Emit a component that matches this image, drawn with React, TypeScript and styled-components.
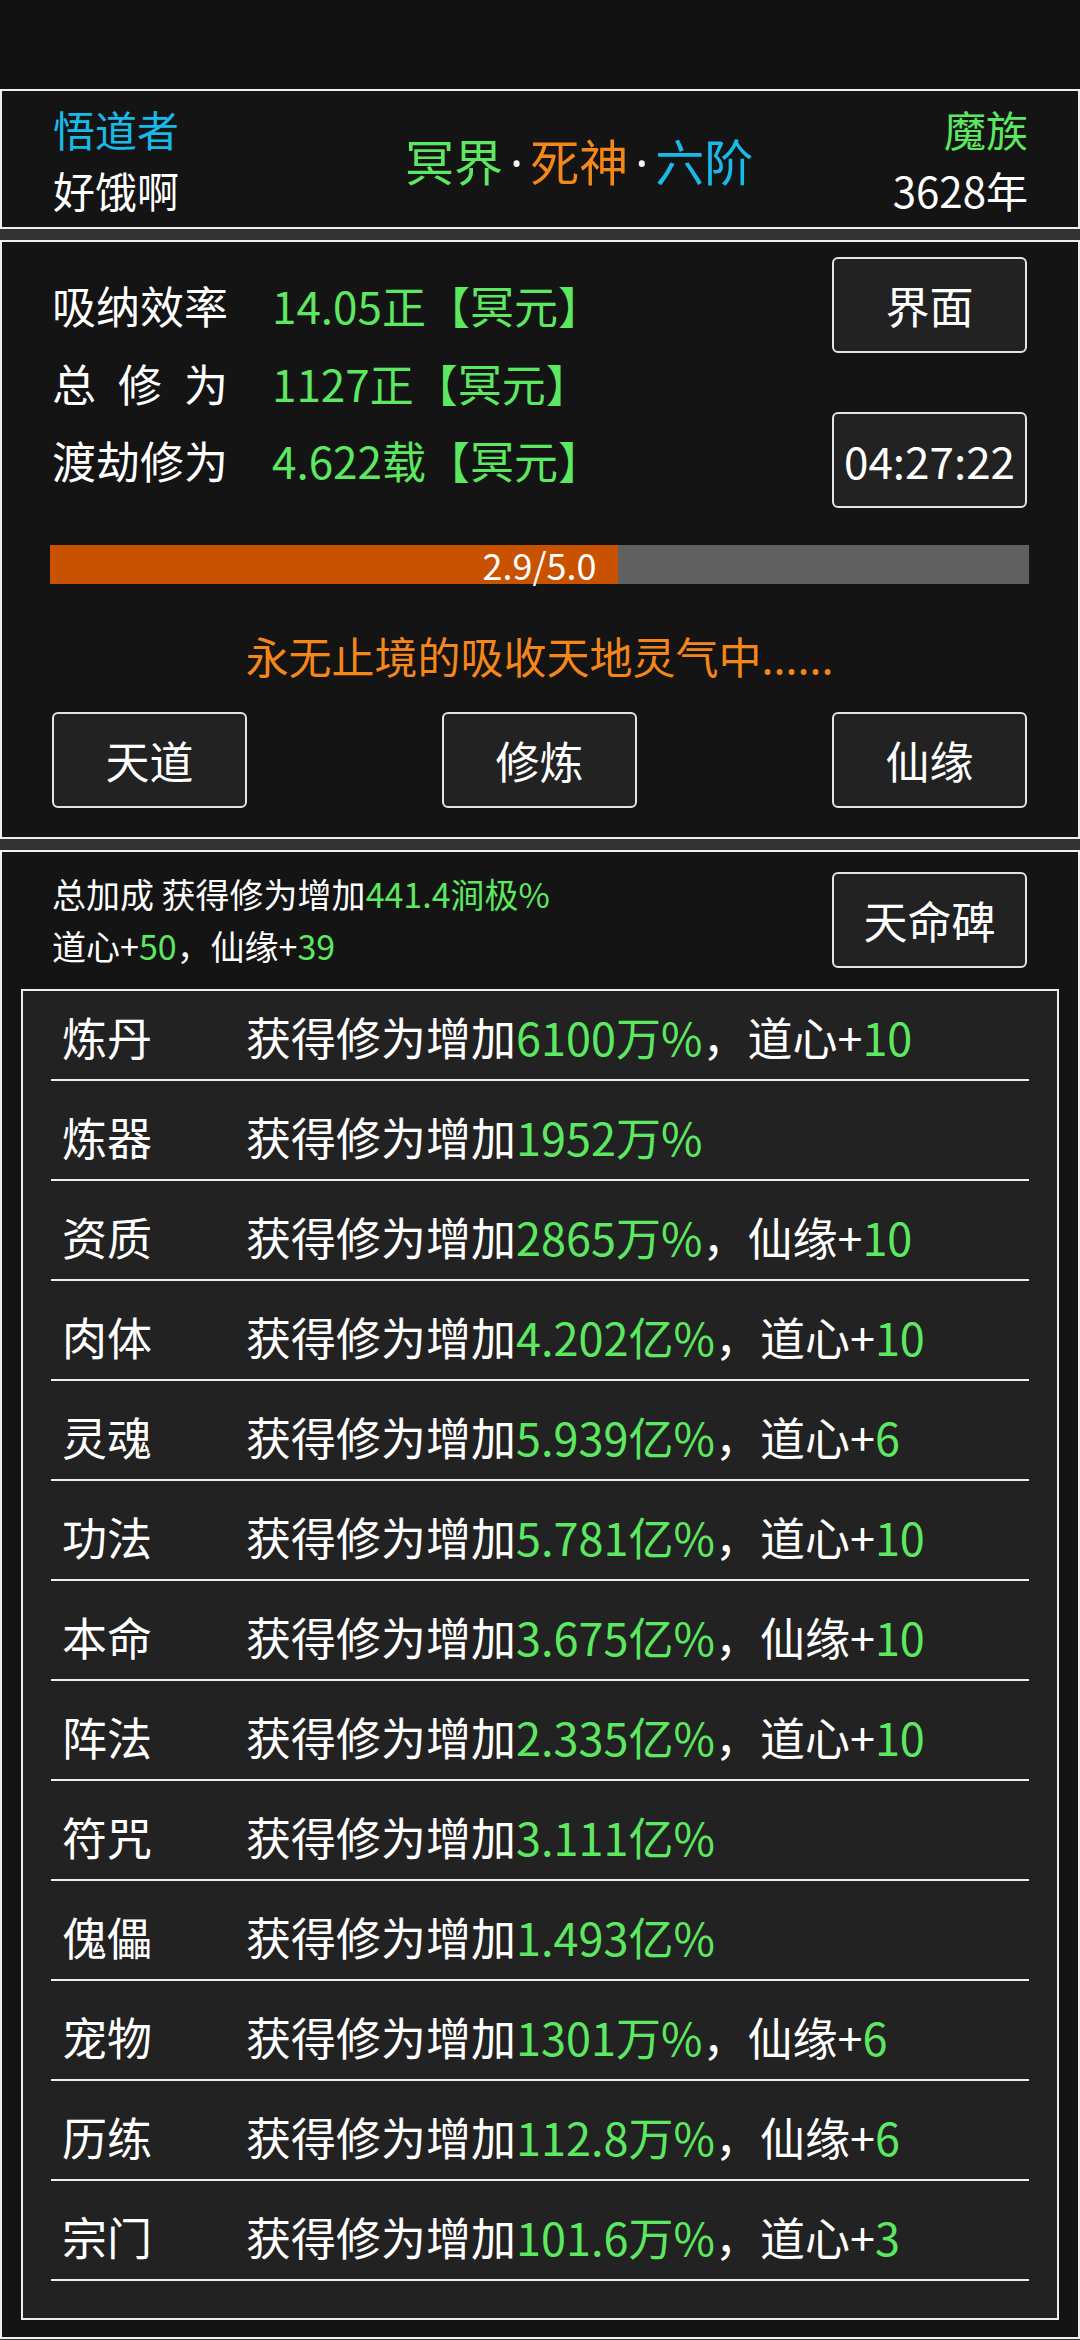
import React from "react";
import styled, { createGlobalStyle } from "styled-components";

const GREEN = "#5ce860";
const CYAN = "#19b9ea";
const ORANGE = "#f5861a";

const GlobalStyle = createGlobalStyle`
  html, body {
    margin: 0;
    padding: 0;
    background: #333333;
  }
  body {
    font-family: "Noto Sans CJK SC", "Noto Sans", sans-serif;
    color: #ffffff;
  }
  * { box-sizing: border-box; }
`;

const Page = styled.div`
  width: 1080px;
  height: 2340px;
  display: flex;
  flex-direction: column;
  background: #333333;
`;

const TopBar = styled.div`
  height: 89px;
  flex: none;
  background: #121212;
`;

const Panel = styled.section<{ $gap?: boolean }>`
  flex: none;
  border: 2px solid #f0f0f0;
  background: #141414;
  margin-top: ${(p) => (p.$gap ? "11px" : "0")};
`;

const HeaderRow = styled.div`
  height: 136px;
  display: grid;
  grid-template-columns: 352px auto 1fr;
  align-items: center;
  padding: 0 50px 0 51px;
`;

const SideCol = styled.div<{ $right?: boolean }>`
  display: flex;
  flex-direction: column;
  align-items: ${(p) => (p.$right ? "flex-end" : "flex-start")};
  font-size: 42px;
  line-height: 61px;
`;

const Colored = styled.span<{ $c?: string }>`
  color: ${(p) => p.$c || "#ffffff"};
`;

const Title = styled.div`
  font-size: 49px;
  line-height: 60px;
  white-space: nowrap;
  padding-top: 4px;
`;

// narrow Latin middle dot between the realm names
const Dot = styled.span`
  font-family: "Noto Sans", "DejaVu Sans", sans-serif;
  color: #f4f4f4;
  margin: 0 7px;
`;

const MainBody = styled.div`
  padding: 15px 51px 29px 50px;
  display: flex;
  flex-direction: column;
`;

const StatsGrid = styled.div`
  display: grid;
  grid-template-columns: 1fr 195px;
  grid-template-rows: 96px 59px 96px;
`;

const StatLine = styled.div<{ $row: number }>`
  grid-column: 1;
  grid-row: ${(p) => p.$row};
  display: flex;
  align-items: center;
  font-size: 44px;
  white-space: nowrap;
`;

const StatLabel = styled.div`
  width: 176px;
  margin-right: 44px;
  display: flex;
  justify-content: space-between;
`;

const Button = styled.button<{ $row?: number }>`
  width: 195px;
  height: 96px;
  border: 2px solid #e4e4e4;
  border-radius: 6px;
  background: #222222;
  color: #ffffff;
  font-family: inherit;
  font-size: 44px;
  padding: 0;
  cursor: pointer;
  grid-column: 2;
  grid-row: ${(p) => p.$row || "auto"};
`;

const Track = styled.div`
  position: relative;
  margin: 37px -2px 0;
  height: 39px;
  background: #606060;
`;

const Fill = styled.div`
  height: 100%;
  background: #c85200;
`;

const TrackLabel = styled.div`
  position: absolute;
  inset: 0;
  display: flex;
  align-items: center;
  justify-content: center;
  font-size: 36px;
  line-height: 39px;
  color: #ffffff;
`;

const Status = styled.div`
  margin-top: 44px;
  text-align: center;
  font-size: 43px;
  line-height: 54px;
  color: ${ORANGE};
`;

const ButtonRow = styled.div`
  margin-top: 30px;
  display: flex;
  justify-content: space-between;
`;

const BonusBody = styled.div`
  padding: 20px 19px 17px;
`;

const BonusHeader = styled.div`
  height: 96px;
  display: flex;
  justify-content: space-between;
  align-items: center;
  padding: 0 32px 0 31px;
  margin-bottom: 21px;
`;

const BonusText = styled.div`
  font-size: 34px;
  line-height: 52px;
  white-space: nowrap;
`;

const ListBox = styled.div`
  border: 2px solid #eeeeee;
  background: #222222;
  padding: 0 28px 37px;
`;

const Row = styled.div`
  height: 100px;
  border-bottom: 2px solid #eeeeee;
  display: flex;
  align-items: flex-end;
  padding: 0 0 17px 11px;
  font-size: 45px;
  line-height: 50px;
  white-space: nowrap;

  &:first-child {
    height: 90px;
  }
`;

const RowLabel = styled.div`
  width: 184px;
  flex: none;
`;

type Bonus = { name: string; amount: string; extra?: [string, string] };

const bonuses: Bonus[] = [
  { name: "炼丹", amount: "6100万%", extra: ["道心+", "10"] },
  { name: "炼器", amount: "1952万%" },
  { name: "资质", amount: "2865万%", extra: ["仙缘+", "10"] },
  { name: "肉体", amount: "4.202亿%", extra: ["道心+", "10"] },
  { name: "灵魂", amount: "5.939亿%", extra: ["道心+", "6"] },
  { name: "功法", amount: "5.781亿%", extra: ["道心+", "10"] },
  { name: "本命", amount: "3.675亿%", extra: ["仙缘+", "10"] },
  { name: "阵法", amount: "2.335亿%", extra: ["道心+", "10"] },
  { name: "符咒", amount: "3.111亿%" },
  { name: "傀儡", amount: "1.493亿%" },
  { name: "宠物", amount: "1301万%", extra: ["仙缘+", "6"] },
  { name: "历练", amount: "112.8万%", extra: ["仙缘+", "6"] },
  { name: "宗门", amount: "101.6万%", extra: ["道心+", "3"] },
];

function App() {
  const progress = 2.9 / 5.0;

  return (
    <Page>
      <GlobalStyle />
      <TopBar />

      <Panel>
        <HeaderRow>
          <SideCol>
            <Colored $c={CYAN}>悟道者</Colored>
            <Colored>好饿啊</Colored>
          </SideCol>
          <Title>
            <Colored $c={GREEN}>冥界</Colored>
            <Dot>·</Dot>
            <Colored $c={ORANGE}>死神</Colored>
            <Dot>·</Dot>
            <Colored $c={CYAN}>六阶</Colored>
          </Title>
          <SideCol $right>
            <Colored $c={GREEN}>魔族</Colored>
            <Colored>3628年</Colored>
          </SideCol>
        </HeaderRow>
      </Panel>

      <Panel $gap>
        <MainBody>
          <StatsGrid>
            <StatLine $row={1}>
              <StatLabel>吸纳效率</StatLabel>
              <Colored $c={GREEN}>14.05正【冥元】</Colored>
            </StatLine>
            <Button $row={1}>界面</Button>
            <StatLine $row={2}>
              <StatLabel>
                <span>总</span>
                <span>修</span>
                <span>为</span>
              </StatLabel>
              <Colored $c={GREEN}>1127正【冥元】</Colored>
            </StatLine>
            <StatLine $row={3}>
              <StatLabel>渡劫修为</StatLabel>
              <Colored $c={GREEN}>4.622载【冥元】</Colored>
            </StatLine>
            <Button $row={3}>04:27:22</Button>
          </StatsGrid>

          <Track>
            <Fill style={{ width: `${progress * 100}%` }} />
            <TrackLabel>2.9/5.0</TrackLabel>
          </Track>

          <Status>永无止境的吸收天地灵气中......</Status>

          <ButtonRow>
            <Button>天道</Button>
            <Button>修炼</Button>
            <Button>仙缘</Button>
          </ButtonRow>
        </MainBody>
      </Panel>

      <Panel $gap>
        <BonusBody>
          <BonusHeader>
            <BonusText>
              <div>
                总加成 获得修为增加<Colored $c={GREEN}>441.4涧极%</Colored>
              </div>
              <div>
                道心+<Colored $c={GREEN}>50</Colored>，仙缘+
                <Colored $c={GREEN}>39</Colored>
              </div>
            </BonusText>
            <Button>天命碑</Button>
          </BonusHeader>

          <ListBox>
            {bonuses.map((b) => (
              <Row key={b.name}>
                <RowLabel>{b.name}</RowLabel>
                <span>
                  获得修为增加<Colored $c={GREEN}>{b.amount}</Colored>
                  {b.extra && (
                    <>
                      ，{b.extra[0]}
                      <Colored $c={GREEN}>{b.extra[1]}</Colored>
                    </>
                  )}
                </span>
              </Row>
            ))}
          </ListBox>
        </BonusBody>
      </Panel>
    </Page>
  );
}

export default App;
